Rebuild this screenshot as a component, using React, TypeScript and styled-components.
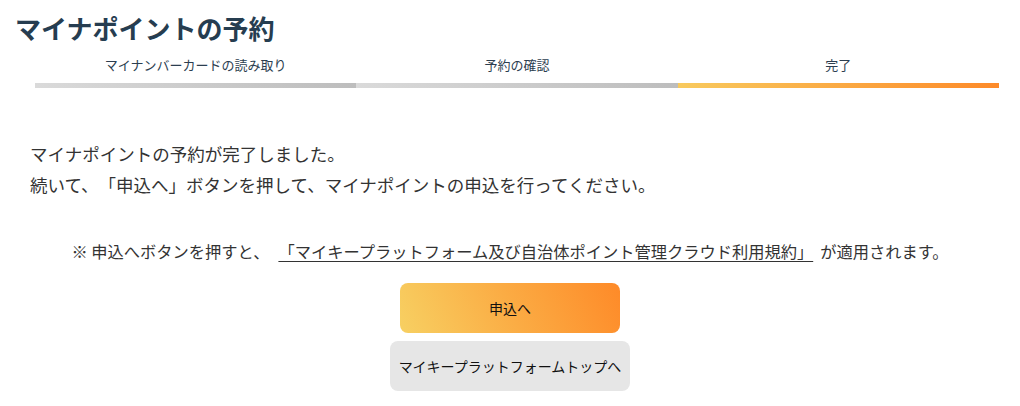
import * as React from "react";
import styled, { createGlobalStyle } from "styled-components";

const GlobalStyle = createGlobalStyle`
  body {
    margin: 0;
    background: #ffffff;
    font-family: "Noto Sans CJK JP", "Noto Sans", sans-serif;
    color: #333333;
    text-spacing-trim: space-all;
  }
`;

const Page = styled.div`
  width: 1020px;
  height: 406px;
  padding: 8px 15px 0;
  box-sizing: border-box;
  overflow: hidden;
`;

const Title = styled.h1`
  margin: 0;
  font-size: 26px;
  line-height: 40px;
  font-weight: 700;
  color: #263d50;
`;

const Stepper = styled.div`
  display: flex;
  margin: 8px 6px 0 20px;
`;

interface StepProps {
    active: boolean;
}

const Step = styled.div<StepProps>`
  flex: 1;
  display: flex;
  flex-direction: column;
  align-items: center;
  gap: 9px;
`;

const StepLabel = styled.div`
  font-size: 13px;
  line-height: 18px;
  color: #2c3e50;
`;

const StepBar = styled.div<StepProps>`
  width: 100%;
  height: 5px;
  background: ${(props) => (props.active
        ? "linear-gradient(90deg, #f8ca5e 0%, #fd8a29 100%)"
        : "linear-gradient(90deg, #dadada 0%, #bdbdbd 100%)")};
`;

const Message = styled.div`
  margin: 50px 0 0 15px;
  font-size: 17.5px;
  line-height: 31px;
  color: #333333;
`;

const Note = styled.p`
  margin: 39px 0 0;
  text-align: center;
  font-size: 16.25px;
  line-height: 24px;
  color: #333333;
`;

const TermsLink = styled.a`
  margin: 0 7px 0 9px;
  color: #333333;
  text-decoration: underline;
  text-underline-offset: 3px;
`;

const Actions = styled.div`
  display: flex;
  flex-direction: column;
  align-items: center;
  gap: 8px;
  margin-top: 20px;
`;

interface ButtonProps {
    primary?: boolean;
}

const ActionButton = styled.button<ButtonProps>`
  width: ${(props) => (props.primary ? "220px" : "240px")};
  height: 50px;
  border: none;
  border-radius: 8px;
  font-family: inherit;
  font-size: 14px;
  color: #111111;
  cursor: pointer;
  background: ${(props) => (props.primary
        ? "linear-gradient(65deg, #f7d062 0%, #fbac44 50%, #fe8a28 100%)"
        : "#e6e6e6")};
`;

const steps = ["マイナンバーカードの読み取り", "予約の確認", "完了"];

export default function App() {
    return (
        <Page>
            <GlobalStyle />
            <Title>マイナポイントの予約</Title>
            <Stepper>
                {steps.map((label, i) => (
                    <Step key={label} active={i === steps.length - 1}>
                        <StepLabel>{label}</StepLabel>
                        <StepBar active={i === steps.length - 1} />
                    </Step>
                ))}
            </Stepper>
            <Message>
                <div>マイナポイントの予約が完了しました。</div>
                <div>続いて、「申込へ」ボタンを押して、マイナポイントの申込を行ってください。</div>
            </Message>
            <Note>
                ※ 申込へボタンを押すと、
                <TermsLink href="#">「マイキープラットフォーム及び自治体ポイント管理クラウド利用規約」</TermsLink>
                が適用されます。
            </Note>
            <Actions>
                <ActionButton primary>申込へ</ActionButton>
                <ActionButton>マイキープラットフォームトップへ</ActionButton>
            </Actions>
        </Page>
    );
}
